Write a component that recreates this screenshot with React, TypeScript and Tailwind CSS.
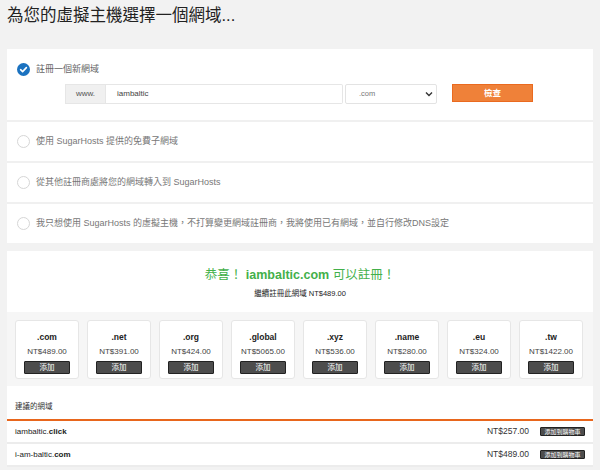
import React from "react";

const FONT = '"Liberation Sans", Arial, "Noto Sans CJK TC", sans-serif';

function Radio({ checked }: { checked?: boolean }) {
  if (checked) {
    return (
      <svg width="13" height="13" viewBox="0 0 13 13" className="shrink-0">
        <circle cx="6.5" cy="6.5" r="6.5" fill="#1b72c0" />
        <path d="M3.6 6.7 L5.6 8.6 L9.4 4.6" stroke="#fff" strokeWidth="1.6" fill="none" strokeLinecap="round" strokeLinejoin="round" />
      </svg>
    );
  }
  return <div className="w-[13px] h-[13px] rounded-full border border-[#d6d6d6] bg-white shrink-0" />;
}

const tlds = [
  { n: ".com", p: "NT$489.00" },
  { n: ".net", p: "NT$391.00" },
  { n: ".org", p: "NT$424.00" },
  { n: ".global", p: "NT$5065.00" },
  { n: ".xyz", p: "NT$536.00" },
  { n: ".name", p: "NT$280.00" },
  { n: ".eu", p: "NT$324.00" },
  { n: ".tw", p: "NT$1422.00" },
];

export default function App() {
  return (
    <div className="w-[600px] h-[470px] bg-[#f2f2f2] overflow-hidden" style={{ fontFamily: FONT }}>
      <div className="h-[49px] pl-[7px] pt-[2px]">
        <div className="text-[16.5px] leading-[26px] text-[#222]">為您的虛擬主機選擇一個網域...</div>
      </div>
      <div className="ml-[7px] w-[586px] bg-white">
        <div className="h-[71px] pt-[14px] pl-[10px]">
          <div className="flex items-center gap-[6px] h-[13px]">
            <Radio checked />
            <span className="text-[9px] text-[#666]">註冊一個新網域</span>
          </div>
          <div className="flex items-start mt-[8px] ml-[48px] h-[20px]">
            <div className="w-[41px] h-[20px] bg-[#f0f0f0] border border-[#e6e6e6] flex items-center justify-center text-[8px] text-[#555]">www.</div>
            <div className="w-[237px] h-[20px] border border-[#e6e6e6] border-l-0 rounded-r-[2px] flex items-center pl-[11px] text-[8px] text-[#444]">iambaltic</div>
            <div className="ml-[2px] w-[92px] h-[20px] border border-[#e3e3e3] rounded-[2px] flex items-center justify-between pl-[13px] pr-[3px] text-[7.5px] text-[#777]">
              <span>.com</span>
              <svg width="8" height="6" viewBox="0 0 8 6"><path d="M1 1.5 L4 4.5 L7 1.5" stroke="#333" strokeWidth="1.4" fill="none" /></svg>
            </div>
            <div className="ml-[15px] w-[81px] h-[18px] bg-[#ef8139] border border-[#ea6a1f] flex items-center justify-center text-[8.5px] font-bold text-white">檢查</div>
          </div>
        </div>
        {[
          "使用 SugarHosts 提供的免費子網域",
          "從其他註冊商處將您的網域轉入到 SugarHosts",
          "我只想使用 SugarHosts 的虛擬主機，不打算變更網域註冊商，我將使用已有網域，並自行修改DNS設定",
        ].map((t) => (
          <div key={t} className="h-[41px] border-t-2 border-[#f0f0f0] flex items-center gap-[6px] pl-[10px]">
            <Radio />
            <span className="text-[9px] text-[#777]">{t}</span>
          </div>
        ))}
      </div>

      <div className="ml-[7px] mt-[8px] w-[586px] bg-white">
        <div className="h-[61px] flex flex-col items-center pt-[16px]">
          <div className="text-[12.5px] leading-[16px] text-[#43b04a]">
            恭喜！ <span className="font-bold">iambaltic.com</span> 可以註冊！
          </div>
          <div className="mt-[5px] text-[7.5px] leading-[11px] text-[#222]">繼續註冊此網域 NT$489.00</div>
        </div>
        <div className="bg-[#f6f6f6] h-[74px] pt-[8px] pl-[8px] flex gap-[8px]">
          {tlds.map((d) => (
            <div key={d.n} className="w-[64px] h-[59px] bg-white border border-[#e6e6e6] rounded-[3px] flex flex-col items-center">
              <div className="mt-[10px] text-[8.5px] leading-[12px] text-[#222] font-semibold">{d.n}</div>
              <div className="mt-[3px] text-[8px] leading-[12px] text-[#444]">{d.p}</div>
              <div className="mt-[3px] w-[46px] h-[13px] bg-[#4d4d4d] border border-[#222] rounded-[1px] flex items-center justify-center text-[7.5px] text-white">添加</div>
            </div>
          ))}
        </div>
        <div className="h-[33px] pt-[15px] pl-[8px] text-[7.5px] leading-[12px] text-[#333]">建議的網域</div>
        <div className="h-[2px] bg-[#e8661c]" />
        {[
          { a: "iambaltic.", b: "click", p: "NT$257.00" },
          { a: "i-am-baltic.", b: "com", p: "NT$489.00" },
        ].map((r) => (
          <div key={r.a} className="h-[23px] border-b-2 border-[#ececec] flex items-center pl-[8px] pr-[8px]">
            <span className="text-[8px] text-[#222] flex-1">
              {r.a}
              <span className="font-bold">{r.b}</span>
            </span>
            <span className="text-[8.5px] text-[#333]">{r.p}</span>
            <div className="ml-[11px] w-[45px] h-[9px] bg-[#4d4d4d] border border-[#222] rounded-[1px] flex items-center justify-center text-[6px] leading-none text-white">添加到購物車</div>
          </div>
        ))}
      </div>
    </div>
  );
}
